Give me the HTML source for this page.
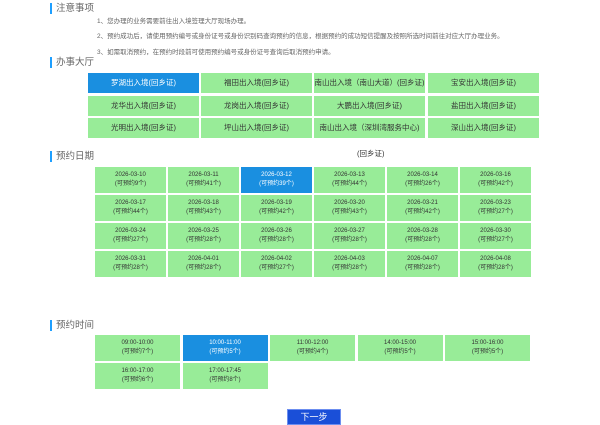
<!DOCTYPE html>
<html><head><meta charset="utf-8"><style>
body{margin:0;width:600px;height:417px;overflow:hidden;background:#fff;font-family:"Liberation Sans","Noto Sans CJK SC",sans-serif;position:relative}
.h{position:absolute;left:50px;font-size:9.5px;color:#666;line-height:11px;padding-left:4px;border-left:2px solid #1e9fff;height:11px;}
.n{position:absolute;left:97px;font-size:6.5px;color:#666;white-space:nowrap}
.c{position:absolute;background:#98ec98;color:#333;text-align:center;font-size:7.5px;box-sizing:border-box}
.c.s{background:#1a8fe0;color:#fff}
.d{font-size:6px;line-height:9px;padding-top:4px}
</style></head><body>
<div class="h" style="top:3px">注意事项</div>
<div class="n" style="top:15px">1、您办理的业务需要前往出入境签理大厅现场办理。</div>
<div class="n" style="top:30px">2、预约成功后，请使用预约编号或身份证号或身份识别码查询预约的信息，根据预约的成功短信提醒及按照所选时间前往对应大厅办理业务。</div>
<div class="n" style="top:46px">3、如需取消预约，在预约时段前可使用预约编号或身份证号查询后取消预约申请。</div>
<div class="h" style="top:57px">办事大厅</div>
<div id="halls"></div>
<div style="position:absolute;left:357px;top:148px;font-size:7.5px;color:#333">(回乡证)</div>
<div class="h" style="top:151px">预约日期</div>
<div class="h" style="top:320px">预约时间</div>
<div style="position:absolute;left:287px;top:409px;width:52px;height:14px;background:#1a4fd8;border:1px solid #6c8ef0;color:#fff;font-size:9px;text-align:center;line-height:14px">下一步</div>
<script>
var H=["罗湖出入境(回乡证)","福田出入境(回乡证)","南山出入境（南山大道）(回乡证)","宝安出入境(回乡证)","龙华出入境(回乡证)","龙岗出入境(回乡证)","大鹏出入境(回乡证)","盐田出入境(回乡证)","光明出入境(回乡证)","坪山出入境(回乡证)","南山出入境（深圳湾服务中心)","深山出入境(回乡证)"];
var hx=[88,201,314,428],hy=[73,96,118],s="";
H.forEach(function(t,i){s+='<div class="c'+(i==0?' s':'')+'" style="left:'+hx[i%4]+'px;top:'+hy[i/4|0]+'px;width:111px;height:20px;line-height:20px">'+t+'</div>'});
var D=[["03-10",9],["03-11",41],["03-12",39],["03-13",44],["03-14",26],["03-16",42],["03-17",44],["03-18",43],["03-19",42],["03-20",43],["03-21",42],["03-23",27],["03-24",27],["03-25",28],["03-26",28],["03-27",28],["03-28",28],["03-30",27],["03-31",28],["04-01",28],["04-02",27],["04-03",28],["04-07",28],["04-08",28]];
D.forEach(function(d,i){s+='<div class="c d'+(i==2?' s':'')+'" style="left:'+(95+73*(i%6))+'px;top:'+(167+28*(i/6|0))+'px;width:71px;height:26px">2026-'+d[0]+'<br>(可预约'+d[1]+'个)</div>'});
var T=[["09:00-10:00",7],["10:00-11:00",5],["11:00-12:00",4],["14:00-15:00",5],["15:00-16:00",5],["16:00-17:00",6],["17:00-17:45",8]];
T.forEach(function(d,i){s+='<div class="c d'+(i==1?' s':'')+'" style="left:'+(95+87.5*(i%5))+'px;top:'+(335+28*(i/5|0))+'px;width:85px;height:26px">'+d[0]+'<br>(可预约'+d[1]+'个)</div>'});
document.getElementById('halls').innerHTML=s;
</script>
</body></html>
